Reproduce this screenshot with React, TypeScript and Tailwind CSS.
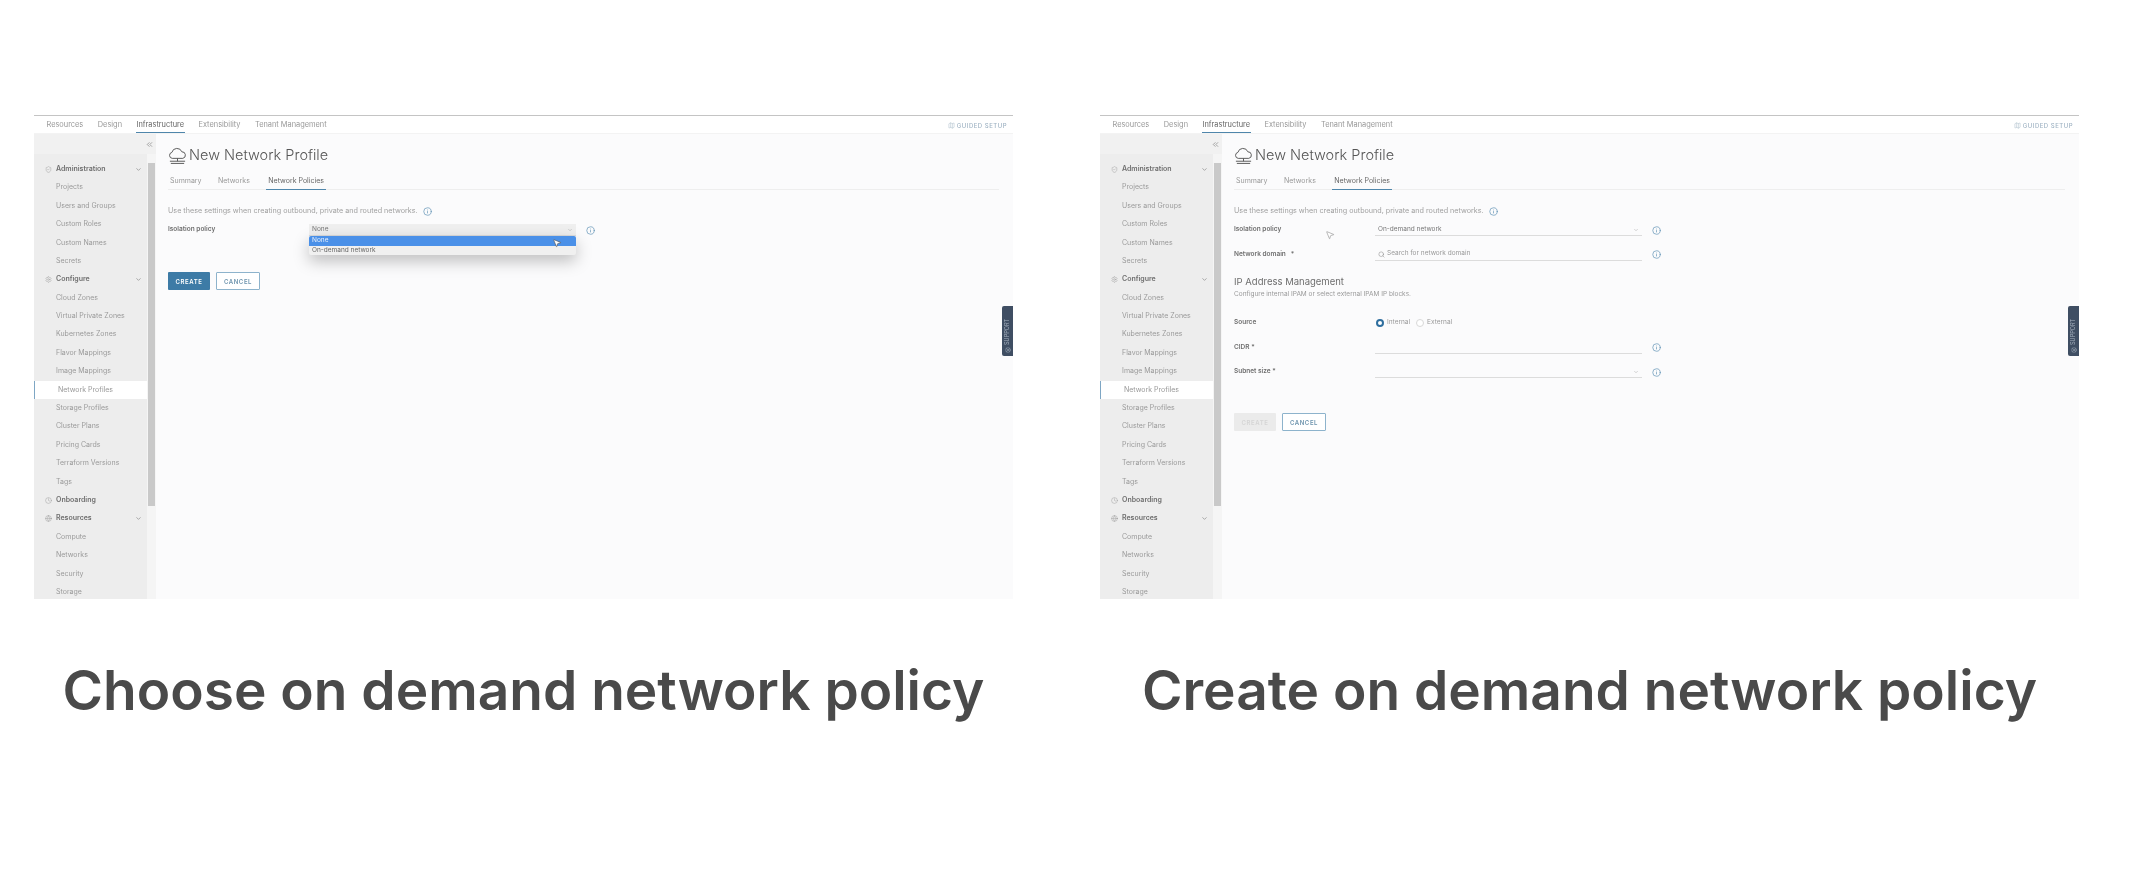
import { ChevronDown, ChevronsLeft, Info, LifeBuoy, Map, MousePointer2, Search, Settings, Clock, Globe, ShieldCheck } from 'lucide-react';

const font = 'font-["Inter","Liberation_Sans",sans-serif]';

const navItems = ['Resources', 'Design', 'Infrastructure', 'Extensibility', 'Tenant Management'];

const sideRows = [
  { label: 'Administration', head: true, icon: ShieldCheck, chevron: true },
  { label: 'Projects' },
  { label: 'Users and Groups' },
  { label: 'Custom Roles' },
  { label: 'Custom Names' },
  { label: 'Secrets' },
  { label: 'Configure', head: true, icon: Settings, chevron: true },
  { label: 'Cloud Zones' },
  { label: 'Virtual Private Zones' },
  { label: 'Kubernetes Zones' },
  { label: 'Flavor Mappings' },
  { label: 'Image Mappings' },
  { label: 'Network Profiles', active: true },
  { label: 'Storage Profiles' },
  { label: 'Cluster Plans' },
  { label: 'Pricing Cards' },
  { label: 'Terraform Versions' },
  { label: 'Tags' },
  { label: 'Onboarding', head: true, icon: Clock },
  { label: 'Resources', head: true, icon: Globe, chevron: true },
  { label: 'Compute' },
  { label: 'Networks' },
  { label: 'Security' },
  { label: 'Storage' },
];

function CloudIcon() {
  return (
    <svg viewBox="0 0 20 18" className="h-[18px] w-[19px] text-[#555]" fill="none" stroke="currentColor" strokeWidth="1">
      <path d="M4.5 11.5a3.2 3.2 0 0 1-.4-6.3 5.5 5.5 0 0 1 10.5-.6 3.5 3.5 0 0 1 1 6.9z" />
      <path d="M10 11.5v3M2 14.5h16M3 16.8h14" />
    </svg>
  );
}

function TopNav() {
  return (
    <div className="flex h-[18px] items-center justify-between border-b border-[#f3f3f3] bg-white pl-[11.5px] pr-[6px]">
      <div className="flex h-full items-center gap-[12.5px]">
        {navItems.map((item) => (
          <div
            key={item}
            className={
              item === 'Infrastructure'
                ? 'flex h-full items-center border-b border-[#4f86ab] px-[1px] pt-[1px] text-[7.4px] text-[#666]'
                : 'flex h-full items-center px-[1px] pt-[1px] text-[7.4px] text-[#999]'
            }
          >
            {item}
          </div>
        ))}
      </div>
      <div className="flex items-center gap-[2px] pt-[1px] text-[6px] font-medium tracking-[0.5px] text-[#9fb3c3]">
        <Map className="h-[7px] w-[7px]" strokeWidth={1.5} />
        GUIDED SETUP
      </div>
    </div>
  );
}

function Sidebar() {
  return (
    <div className="flex w-[122px] shrink-0 flex-col">
      <div className="flex h-[20px] shrink-0 items-center justify-end bg-[#f1f1f1] pr-[2px]">
        <ChevronsLeft className="h-[9px] w-[9px] text-[#888]" />
      </div>
      <div className="flex min-h-0 flex-1">
        <div className="flex w-[113px] flex-col overflow-hidden bg-[#ededed] pt-[6px]">
          {sideRows.map((row) => {
            const Icon = row.icon;
            return (
              <div
                key={row.label + (row.head ? '-h' : '')}
                className={
                  row.active
                    ? 'flex h-[18.4px] shrink-0 items-center border-l border-[#7ea6c4] bg-white pl-[23px] text-[7px] text-[#999]'
                    : row.head
                      ? 'flex h-[18.4px] shrink-0 items-center justify-between pl-[11px] pr-[5px] text-[7px] font-semibold text-[#6e6e6e]'
                      : 'flex h-[18.4px] shrink-0 items-center pl-[22px] text-[7px] text-[#9a9a9a]'
                }
              >
                {row.head && Icon ? (
                  <>
                    <span className="flex items-center gap-[4px]">
                      <Icon className="h-[7px] w-[7px] text-[#999]" strokeWidth={1.5} />
                      {row.label}
                    </span>
                    {row.chevron && <ChevronDown className="h-[7px] w-[7px] text-[#777]" />}
                  </>
                ) : (
                  row.label
                )}
              </div>
            );
          })}
        </div>
        <div className="flex w-[9px] flex-col bg-[#f5f5f5] px-[1px] pb-[93px] pt-[9px]">
          <div className="flex-1 bg-[#c9c9c9]" />
        </div>
      </div>
    </div>
  );
}

function InfoDot() {
  return <Info className="h-[9px] w-[9px] shrink-0 text-[#5c8fb3]" strokeWidth={1.8} />;
}

function FormRow({ label, children, info = true, className = '' }: { label: string; children?: React.ReactNode; info?: boolean; className?: string }) {
  return (
    <div className={`flex items-center ${className}`}>
      <div className="w-[141px] shrink-0 whitespace-pre text-[6.5px] font-semibold text-[#6e6e6e]">{label}</div>
      <div className="relative w-[267px]">{children}</div>
      {info && (
        <div className="ml-[10px]">
          <InfoDot />
        </div>
      )}
    </div>
  );
}

function Field({ children, chevron, bg }: { children?: React.ReactNode; chevron?: boolean; bg?: boolean }) {
  return (
    <div className={`flex h-[12px] items-center justify-between border-b border-[#dcdcdc] px-[3px] text-[6.5px] text-[#777] ${bg ? 'bg-[#efefef]' : ''}`}>
      <span className="flex items-center gap-[2px]">{children}</span>
      {chevron && <ChevronDown className="h-[6px] w-[6px] text-[#aaa]" />}
    </div>
  );
}

function Buttons({ disabled }: { disabled?: boolean }) {
  return (
    <div className="flex gap-[6px]">
      <div
        className={
          disabled
            ? 'flex h-[18px] w-[42px] items-center justify-center rounded-[1px] bg-[#ebebeb] text-[6px] font-semibold tracking-[0.6px] text-[#d5d5d5]'
            : 'flex h-[18px] w-[42px] items-center justify-center rounded-[1px] bg-[#3d7ba6] text-[6px] font-semibold tracking-[0.6px] text-white'
        }
      >
        CREATE
      </div>
      <div className="flex h-[18px] w-[44px] items-center justify-center rounded-[1px] border border-[#8db3cc] bg-white text-[6px] font-semibold tracking-[0.6px] text-[#6c93ad]">
        CANCEL
      </div>
    </div>
  );
}

function ChooseForm() {
  return (
    <>
      <FormRow label="Isolation policy" className="mt-[8px]">
        <Field chevron bg>
          None
        </Field>
        {/* open select list */}
        <div className="absolute left-0 right-0 top-[12px] z-10 overflow-hidden rounded-[2px] bg-[#f0f0f0] text-[6.5px] text-[#666] shadow-[0_6px_16px_rgba(0,0,0,0.25)]">
          <div className="flex h-[10px] items-center bg-[#4a90e8] px-[3px] text-[#e8f0fb]">None</div>
          <div className="flex h-[9px] items-center px-[3px]">On-demand network</div>
        </div>
        <MousePointer2 className="absolute left-[243px] top-[14px] z-20 h-[10px] w-[10px] fill-white text-[#555]" strokeWidth={1.5} />
      </FormRow>
      <div className="mt-[36px]">
        <Buttons />
      </div>
    </>
  );
}

function CreateForm() {
  return (
    <>
      <FormRow label="Isolation policy" className="mt-[8px]">
        <Field chevron>On-demand network</Field>
        <MousePointer2 className="absolute -left-[50px] top-[6px] h-[10px] w-[10px] fill-white text-[#777]" strokeWidth={1.2} />
      </FormRow>
      <FormRow label="Network domain   *" className="mt-[12.5px]">
        <Field>
          <Search className="h-[7px] w-[7px] text-[#777]" strokeWidth={1.5} />
          <span className="text-[#999]">Search for network domain</span>
        </Field>
      </FormRow>
      <div className="mt-[15px] text-[9.5px] leading-[12px] text-[#6e6e6e]">IP Address Management</div>
      <div className="mt-[1px] text-[6.5px] leading-[10px] text-[#999]">Configure internal IPAM or select external IPAM IP blocks.</div>
      <FormRow label="Source" info={false} className="mt-[18.5px]">
        <div className="flex h-[12px] items-center text-[6.5px] text-[#999]">
          <span className="ml-[1px] h-[8px] w-[8px] rounded-full border-[2.5px] border-[#2f6f9f] bg-white" />
          <span className="ml-[3px]">Internal</span>
          <span className="ml-[6px] h-[8px] w-[8px] rounded-full border border-[#d8d8d8] bg-white" />
          <span className="ml-[3px]">External</span>
        </div>
      </FormRow>
      <FormRow label="CIDR *" className="mt-[12.5px]">
        <Field />
      </FormRow>
      <FormRow label="Subnet size *" className="mt-[12.5px]">
        <Field chevron />
      </FormRow>
      <div className="mt-[35px]">
        <Buttons disabled />
      </div>
    </>
  );
}

function Panel({ variant, caption }: { variant: 'choose' | 'create'; caption: string }) {
  return (
    <div className="w-[979px] shrink-0">
      <div className="relative flex h-[484px] flex-col overflow-hidden border-t border-[#c4c4c4] bg-[#fbfbfc] blur-[0.6px]">
        <TopNav />
        <div className="flex min-h-0 flex-1">
          <Sidebar />
          <div className="flex-1 pl-[12px] pr-[14px] pt-[4px]">
            <div className="flex h-[28px] items-end gap-[2px] pb-[1px]">
              <CloudIcon />
              <div className="text-[14.5px] font-light leading-[20px] text-[#555]">New Network Profile</div>
            </div>
            <div className="mt-[8px] flex h-[16px] items-end gap-[16.5px] border-b border-[#eeeeee] text-[7px]">
              <div className="pb-[3px] pl-[2px] text-[#999]">Summary</div>
              <div className="pb-[3px] text-[#999]">Networks</div>
              <div className="-mb-px border-b border-[#4f86ab] px-[2px] pb-[3px] text-[#666]">Network Policies</div>
            </div>
            <div className="mt-[16px] flex items-center gap-[5px] text-[7.2px] leading-[10px] text-[#a0a0a0]">
              Use these settings when creating outbound, private and routed networks.
              <InfoDot />
            </div>
            {variant === 'choose' ? <ChooseForm /> : <CreateForm />}
          </div>
        </div>
        {/* support tab sits over the page edge */}
        <div className="absolute right-0 top-[190px] flex h-[50px] w-[11px] flex-col items-center justify-end gap-[2px] rounded-l-[2px] bg-[#3f4e63] pb-[3px] text-[#a9b4c2]">
          <div className="text-[5.5px] [writing-mode:vertical-rl] rotate-180">SUPPORT</div>
          <LifeBuoy className="h-[6px] w-[6px]" strokeWidth={1.5} />
        </div>
      </div>
      <div className="mt-[59px] text-center text-[55px] font-semibold leading-[64px] text-[#4a4a4a]">{caption}</div>
    </div>
  );
}

export default function App() {
  return (
    <div className={`flex h-[874px] w-[2136px] gap-[87px] overflow-hidden bg-white pl-[34px] pt-[115px] ${font}`}>
      <Panel variant="choose" caption="Choose on demand network policy" />
      <Panel variant="create" caption="Create on demand network policy" />
    </div>
  );
}
